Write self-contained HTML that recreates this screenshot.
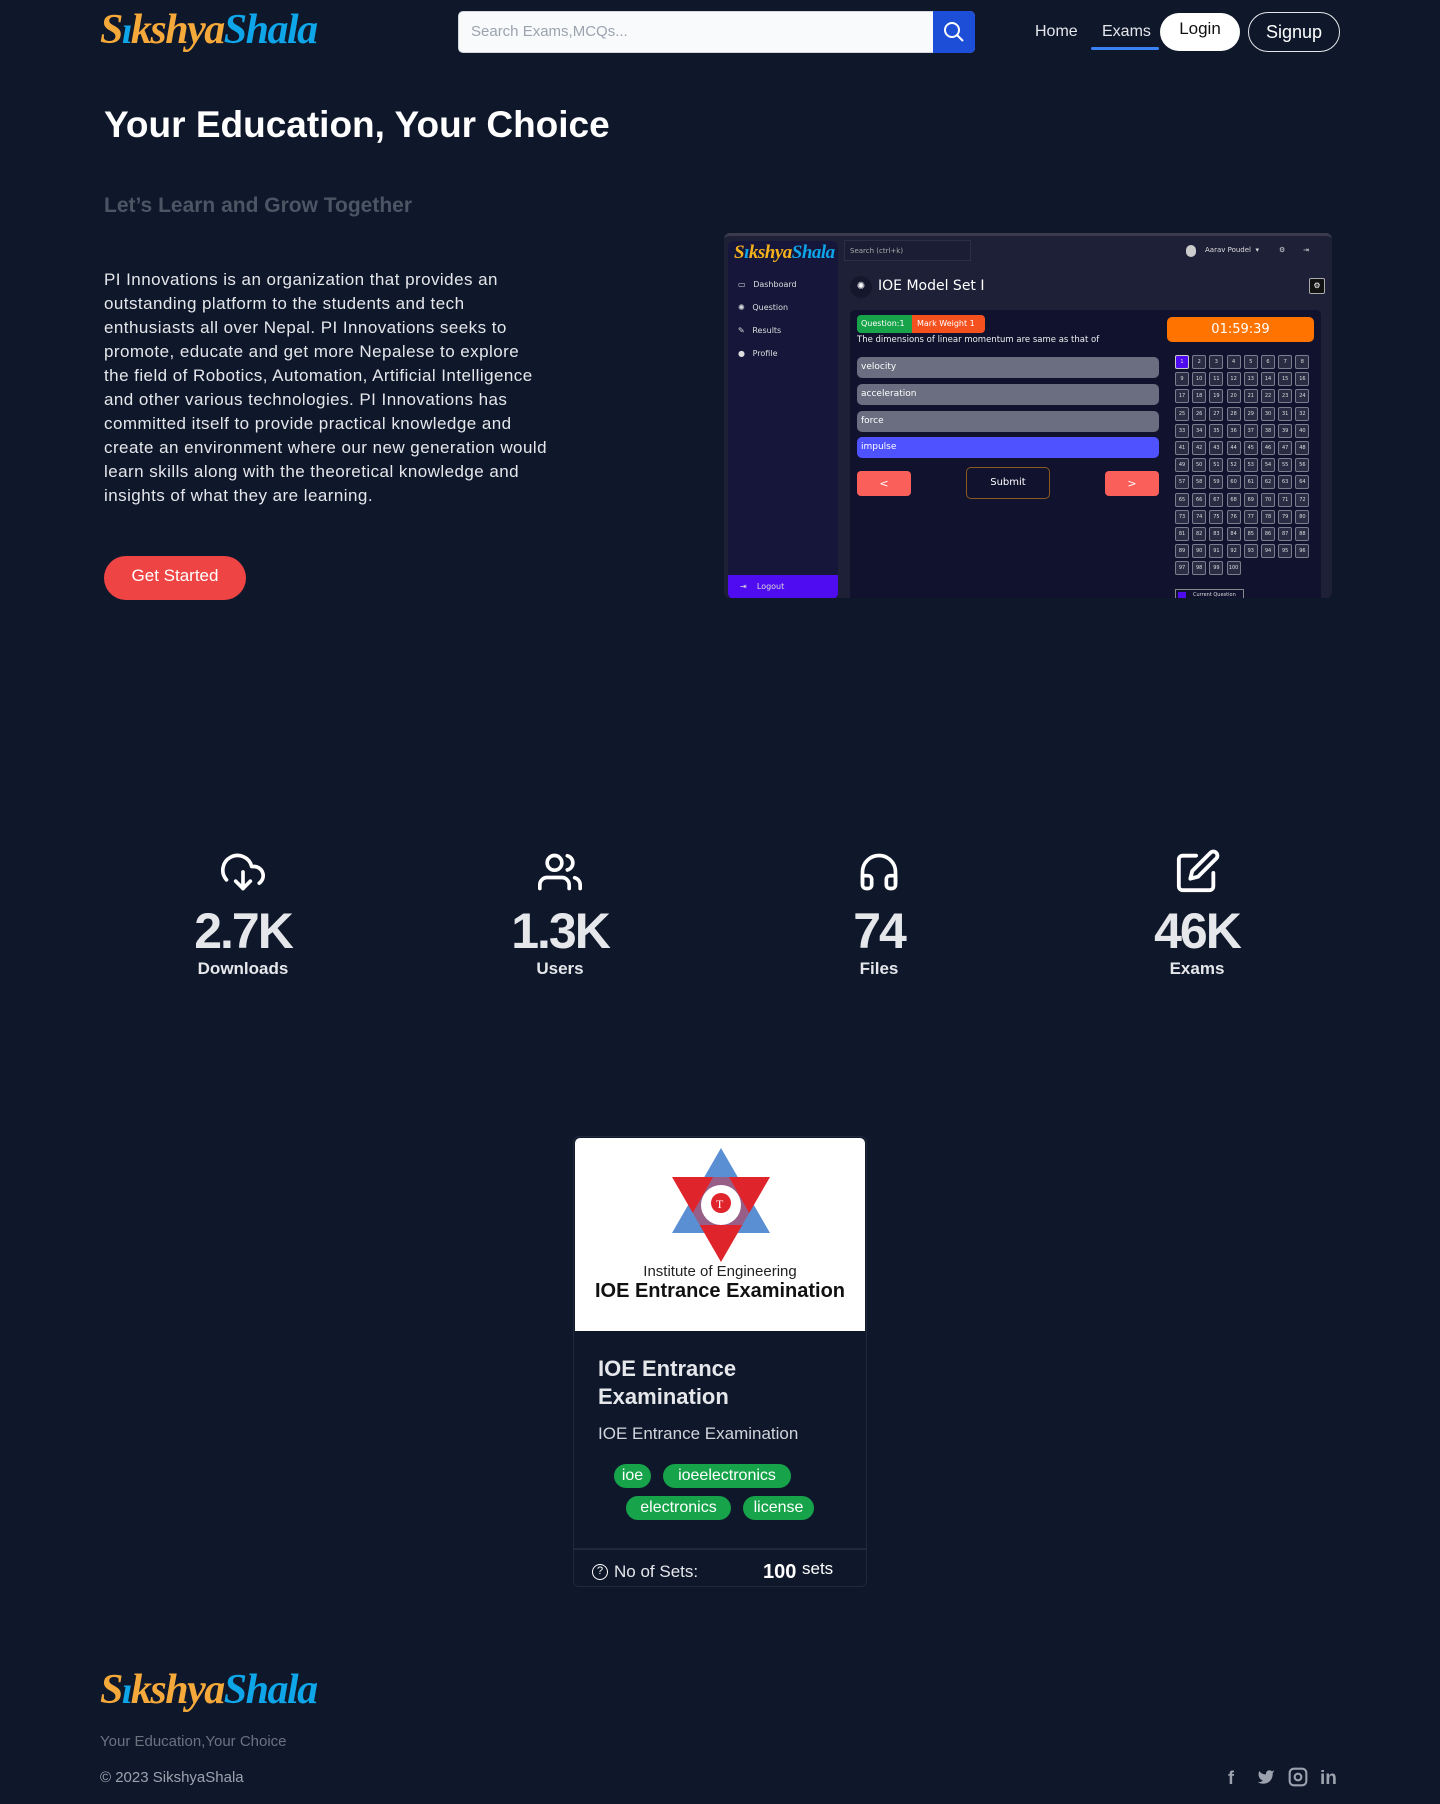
<!DOCTYPE html>
<html><head><meta charset="utf-8"><style>
*{box-sizing:border-box;margin:0;padding:0}
body{width:1440px;height:1804px;background:#0f172a;font-family:"Liberation Sans",sans-serif;color:#fff;position:relative;overflow:hidden}
.abs{position:absolute}
.logo{font-family:"Liberation Serif",serif;font-style:italic;font-weight:bold;font-size:42px;letter-spacing:-1.5px;white-space:nowrap}
.logo .o{color:#f5a93a}.logo .b{color:#0ea5e9}
.nav{font-size:16px;color:#e5e7eb}
.stat{position:absolute;width:240px;text-align:center}
.stat .n{font-size:50px;font-weight:bold;color:#e5e7eb;letter-spacing:-2px;line-height:56px}
.stat .l{font-size:17px;font-weight:bold;color:#e5e7eb}
.p{position:absolute}
.tag{position:absolute;height:24px;border-radius:12px;background:#16a34a;color:#fff;font-size:16px;line-height:24px;text-align:center}
.cell{position:absolute;width:14px;height:14px;border:1px solid #7a7d8e;border-radius:2px;background:#2a2c44;font-size:5px;color:#ddd;text-align:center;line-height:12px}
</style></head><body>

<!-- header -->
<div class="abs logo" style="left:100px;top:6px"><span class="o">S</span><span class="b" style="font-size:38px">ı</span><span class="o">kshya</span><span class="b">Shala</span></div>
<div class="abs" style="left:458px;top:11px;width:517px;height:42px;background:#f8fafc;border-radius:5px;border:1px solid #d1d5db"></div>
<div class="abs" style="left:471px;top:23px;font-size:15px;color:#9ca3af">Search Exams,MCQs...</div>
<div class="abs" style="left:933px;top:11px;width:42px;height:42px;background:#1d4ed8;border-radius:0 5px 5px 0">
<svg width="42" height="42" viewBox="0 0 42 42"><circle cx="19" cy="19" r="7" fill="none" stroke="#fff" stroke-width="2"/><path d="M24 24l6 6" stroke="#fff" stroke-width="2"/></svg></div>
<div class="abs nav" style="left:1035px;top:23px">Home</div>
<div class="abs nav" style="left:1102px;top:23px">Exams</div>
<div class="abs" style="left:1091px;top:47px;width:68px;height:3px;background:#3b82f6;border-radius:2px"></div>
<div class="abs" style="left:1160px;top:13px;width:80px;height:38px;background:#fff;border-radius:19px;color:#111;font-size:17px;text-align:center;line-height:32px">Login</div>
<div class="abs" style="left:1248px;top:12px;width:92px;height:40px;border:1px solid #e5e7eb;border-radius:20px;color:#fff;font-size:18px;text-align:center;line-height:38px">Signup</div>

<!-- hero -->
<div class="abs" style="left:104px;top:104px;font-size:37px;font-weight:bold;color:#fff">Your Education, Your Choice</div>
<div class="abs" style="left:104px;top:194px;font-size:21px;font-weight:bold;color:#4b5563">Let’s Learn and Grow Together</div>
<div class="abs" style="left:104px;top:268px;font-size:17px;line-height:24px;color:#e5e7eb;white-space:nowrap;letter-spacing:0.45px">PI Innovations is an organization that provides an<br>outstanding platform to the students and tech<br>enthusiasts all over Nepal. PI Innovations seeks to<br>promote, educate and get more Nepalese to explore<br>the field of Robotics, Automation, Artificial Intelligence<br>and other various technologies. PI Innovations has<br>committed itself to provide practical knowledge and<br>create an environment where our new generation would<br>learn skills along with the theoretical knowledge and<br>insights of what they are learning.</div>
<div class="abs" style="left:104px;top:556px;width:142px;height:44px;background:#ef4444;border-radius:22px;font-size:17px;text-align:center;line-height:40px">Get Started</div>

<!-- screenshot panel -->
<div class="abs" style="left:724px;top:233px;width:608px;height:365px;background:#1e2038;border-radius:6px;border-top:3px solid #3a3c4e;overflow:hidden;font-family:'DejaVu Sans',sans-serif">
 <div class="p" style="left:4px;top:5px;width:110px;height:360px;background:#15163a;border-radius:6px"></div>
 <div class="p logo" style="left:10px;top:6px;font-size:19px;letter-spacing:-0.5px"><span style="color:#f5b21c">S</span><span class="b">ı</span><span style="color:#f5b21c">kshya</span><span class="b">Shala</span></div>
 <div class="p" style="left:14px;top:37px;font-size:8px;color:#ddd;line-height:23px">▭ &nbsp; Dashboard<br>✺ &nbsp; Question<br>✎ &nbsp; Results<br>● &nbsp; Profile</div>
 <div class="p" style="left:4px;top:339px;width:110px;height:24px;background:#4f0cf0;border-radius:0 0 6px 6px;font-size:8px;color:#ddd;padding:7px 0 0 12px">⇥ &nbsp; &nbsp;Logout</div>
 <div class="p" style="left:120px;top:4px;width:127px;height:21px;background:#1b1d34;border:1px solid #2c2e48;font-size:7px;color:#aaa;padding:6px 0 0 5px">Search (ctrl+k)</div>
 <div class="p" style="left:462px;top:9px;width:10px;height:12px;border-radius:5px;background:#ccc"></div>
 <div class="p" style="left:481px;top:10px;font-size:7px;color:#ddd">Aarav Poudel &nbsp;▾ &nbsp; &nbsp; &nbsp; &nbsp; ⚙ &nbsp; &nbsp; &nbsp; &nbsp;⇥</div>
 <div class="p" style="left:126px;top:40px;width:22px;height:22px;border-radius:11px;background:#15172d;color:#fff;font-size:10px;text-align:center;line-height:22px">✺</div>
 <div class="p" style="left:154px;top:42px;font-size:14px;color:#fff">IOE Model Set I</div>
 <div class="p" style="left:585px;top:42px;width:16px;height:16px;border:1px solid #aaa;border-radius:2px;background:#111;font-size:8px;text-align:center;line-height:14px">⚙</div>
 <div class="p" style="left:126px;top:74px;width:471px;height:300px;background:#11122e;border-radius:5px"></div>
 <div class="p" style="left:133px;top:79px;width:55px;height:18px;background:#16a34a;border-radius:4px 0 0 4px;font-size:8px;color:#fff;line-height:18px;padding-left:4px">Question:1</div>
 <div class="p" style="left:188px;top:79px;width:73px;height:18px;background:#f4511e;border-radius:0 4px 4px 0;font-size:8px;color:#fff;line-height:18px;padding-left:5px">Mark Weight 1</div>
 <div class="p" style="left:133px;top:99px;font-size:8.5px;color:#eee">The dimensions of linear momentum are same as that of</div>
 <div class="p" style="left:133px;top:121px;width:302px;height:21px;background:#6b6e80;border-radius:5px;font-size:9px;color:#fff;line-height:21px;padding-left:4px">velocity</div>
 <div class="p" style="left:133px;top:148px;width:302px;height:21px;background:#6b6e80;border-radius:5px;font-size:9px;color:#fff;line-height:21px;padding-left:4px">acceleration</div>
 <div class="p" style="left:133px;top:175px;width:302px;height:21px;background:#6b6e80;border-radius:5px;font-size:9px;color:#fff;line-height:21px;padding-left:4px">force</div>
 <div class="p" style="left:133px;top:201px;width:302px;height:21px;background:#4f52ff;border-radius:5px;font-size:9px;color:#fff;line-height:21px;padding-left:4px">impulse</div>
 <div class="p" style="left:133px;top:235px;width:54px;height:25px;background:#fa5f5a;border-radius:4px;font-size:11px;text-align:center;line-height:25px">&lt;</div>
 <div class="p" style="left:242px;top:231px;width:84px;height:32px;border:1px solid #8a5a20;border-radius:5px;font-size:10px;text-align:center;line-height:30px">Submit</div>
 <div class="p" style="left:381px;top:235px;width:54px;height:25px;background:#fa5f5a;border-radius:4px;font-size:11px;text-align:center;line-height:25px">&gt;</div>
 <div class="p" style="left:443px;top:81px;width:147px;height:25px;background:#ff7300;border-radius:5px;font-size:13px;text-align:center;line-height:25px">01:59:39</div>
 <div class="p" style="left:451px;top:353px;width:69px;height:12px;border:1px solid #888;font-size:5px;color:#ddd;padding:2px 0 0 17px">Current Question<span style="position:absolute;left:2px;top:2px;width:8px;height:8px;background:#4f0cf0"></span></div>
 <div id="grid"></div>
</div>

<!-- stats -->
<svg class="abs" style="left:218px;top:850px" width="50" height="44" viewBox="0 0 24 24" fill="none" stroke="#fff" stroke-width="2" stroke-linecap="round" stroke-linejoin="round"><polyline points="8 17 12 21 16 17"/><line x1="12" y1="12" x2="12" y2="21"/><path d="M20.88 18.09A5 5 0 0018 9h-1.26A8 8 0 103 16.29"/></svg>
<svg class="abs" style="left:535px;top:850px" width="50" height="44" viewBox="0 0 24 24" fill="none" stroke="#fff" stroke-width="2" stroke-linecap="round" stroke-linejoin="round"><path d="M17 21v-2a4 4 0 00-4-4H5a4 4 0 00-4 4v2"/><circle cx="9" cy="7" r="4"/><path d="M23 21v-2a4 4 0 00-3-3.87"/><path d="M16 3.13a4 4 0 010 7.75"/></svg>
<svg class="abs" style="left:854px;top:850px" width="50" height="44" viewBox="0 0 24 24" fill="none" stroke="#fff" stroke-width="2" stroke-linecap="round" stroke-linejoin="round"><path d="M3 18v-6a9 9 0 0118 0v6"/><path d="M21 19a2 2 0 01-2 2h-1a2 2 0 01-2-2v-3a2 2 0 012-2h3zM3 19a2 2 0 002 2h1a2 2 0 002-2v-3a2 2 0 00-2-2H3z"/></svg>
<svg class="abs" style="left:1174px;top:848px" width="48" height="46" viewBox="0 0 24 24" fill="none" stroke="#fff" stroke-width="2" stroke-linecap="round" stroke-linejoin="round"><path d="M11 4H4a2 2 0 00-2 2v14a2 2 0 002 2h14a2 2 0 002-2v-7"/><path d="M18.5 2.5a2.12 2.12 0 013 3L12 15l-4 1 1-4 9.5-9.5z"/></svg>
<div class="stat" style="left:123px;top:903px"><div class="n">2.7K</div><div class="l">Downloads</div></div>
<div class="stat" style="left:440px;top:903px"><div class="n">1.3K</div><div class="l">Users</div></div>
<div class="stat" style="left:759px;top:903px"><div class="n">74</div><div class="l">Files</div></div>
<div class="stat" style="left:1077px;top:903px"><div class="n">46K</div><div class="l">Exams</div></div>

<!-- card -->
<div class="abs" style="left:573px;top:1136px;width:294px;height:451px;border:1px solid #1e293b;border-radius:6px;background:#0f172a;overflow:hidden">
 <div class="p" style="left:1px;top:1px;width:290px;height:193px;background:#fff;border-radius:5px 5px 0 0"></div>
 <svg class="p" style="left:96px;top:8px" width="102" height="118" viewBox="0 0 102 118">
  <polygon points="51,3 100,88 2,88" fill="#5b8fd4"/>
  <polygon points="2,32 100,32 51,117" fill="#e0242c"/>
  <polygon points="51,18 86,80 16,80" fill="#5b8fd4" opacity=".55"/>
  <circle cx="51" cy="60" r="20" fill="#fff"/><circle cx="51" cy="58" r="10" fill="#e0242c"/>
  <text x="46" y="63" font-size="12" fill="#fff" font-family="Liberation Serif">T</text>
 </svg>
 <div class="p" style="left:0;width:292px;top:126px;text-align:center;font-size:15px;color:#222">Institute of Engineering</div>
 <div class="p" style="left:0;width:292px;top:143px;text-align:center;font-size:20px;font-weight:bold;color:#111">IOE Entrance Examination</div>
 <div class="p" style="left:24px;top:218px;font-size:22px;font-weight:bold;color:#e5e7eb;line-height:28px">IOE Entrance<br>Examination</div>
 <div class="p" style="left:24px;top:287px;font-size:17px;color:#d1d5db">IOE Entrance Examination</div>
 <div class="tag" style="left:40px;top:327px;width:37px">ioe</div>
 <div class="tag" style="left:89px;top:327px;width:128px">ioeelectronics</div>
 <div class="tag" style="left:52px;top:359px;width:105px">electronics</div>
 <div class="tag" style="left:169px;top:359px;width:71px">license</div>
 <div class="p" style="left:0;top:411px;width:294px;height:2px;background:#1e293b"></div>
 <div class="p" style="left:18px;top:427px;width:16px;height:16px;border:1.5px solid #fff;border-radius:8px;font-size:11px;text-align:center;line-height:13px">?</div>
 <div class="p" style="left:40px;top:425px;font-size:17px;color:#e5e7eb">No of Sets:</div>
 <div class="p" style="left:189px;top:424px;font-size:20px;font-weight:bold;color:#fff">100</div>
 <div class="p" style="left:228px;top:422px;font-size:17px;color:#fff">sets</div>
</div>

<!-- footer -->
<div class="abs logo" style="left:100px;top:1666px"><span class="o">S</span><span class="b" style="font-size:38px">ı</span><span class="o">kshya</span><span class="b">Shala</span></div>
<div class="abs" style="left:100px;top:1733px;font-size:15px;color:#6b7280">Your Education,Your Choice</div>
<div class="abs" style="left:100px;top:1769px;font-size:15px;color:#9ca3af">© 2023 SikshyaShala</div>
<div class="abs" style="left:1228px;top:1768px;font-size:18px;color:#9ca3af;font-weight:bold">f</div>
<svg class="abs" style="left:1256px;top:1768px" width="20" height="18" viewBox="0 0 24 24" fill="#9ca3af"><path d="M23 3a10.9 10.9 0 01-3.14 1.53 4.48 4.48 0 00-7.86 3v1A10.66 10.66 0 013 4s-4 9 5 13a11.64 11.64 0 01-7 2c9 5 20 0 20-11.5a4.5 4.5 0 00-.08-.83A7.72 7.72 0 0023 3z"/></svg>
<svg class="abs" style="left:1288px;top:1767px" width="20" height="20" viewBox="0 0 24 24" fill="none" stroke="#9ca3af" stroke-width="2.5"><rect x="2" y="2" width="20" height="20" rx="5"/><circle cx="12" cy="12" r="4"/></svg>
<div class="abs" style="left:1320px;top:1768px;font-size:19px;color:#9ca3af;font-weight:bold">in</div>

<script>
var g=document.getElementById('grid'),h='';
for(var i=0;i<100;i++){var c=i%8,r=Math.floor(i/8);
h+='<div class="cell" style="left:'+(451+c*17.2)+'px;top:'+(119+r*17.2)+'px;'+(i==0?'background:#4f0cf0;border-color:#ccc':'')+'">'+(i+1)+'</div>';}
g.innerHTML=h;
</script>
</body></html>
